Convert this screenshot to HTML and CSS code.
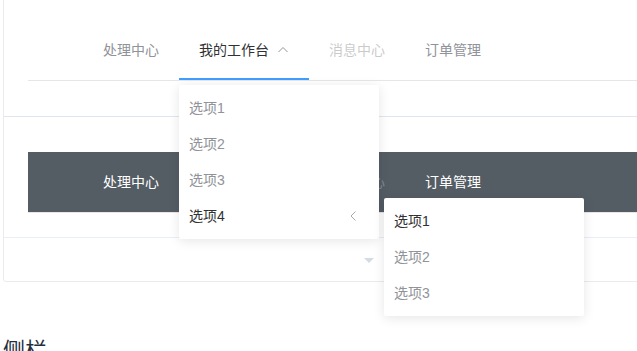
FILE: index.html
```html
<!DOCTYPE html>
<html lang="zh-CN">
<head>
<meta charset="utf-8">
<title>Menu</title>
<link rel="stylesheet" href="styles.css">
</head>
<body>
<div class="page">
  <div class="demo-block">
    <div class="source">
      <nav class="menu menu-light">
        <div class="item">处理中心</div>
        <div class="item submenu is-active">
          <span>我的工作台</span><svg class="arrow-up" width="12" height="12" viewBox="0 0 12 12"><path d="M1.5 8 L6 3.5 L10.5 8" fill="none" stroke="#909399" stroke-width="1"/></svg>
          <div class="popup">
            <div class="pitem">选项1</div>
            <div class="pitem">选项2</div>
            <div class="pitem">选项3</div>
            <div class="pitem psub">选项4
              <svg class="arrow-left" width="12" height="12" viewBox="0 0 12 12"><path d="M8.5 1.5 L4 6 L8.5 10.5" fill="none" stroke="#a4a7ae" stroke-width="1"/></svg>
              <div class="popup nested">
                <div class="pitem on">选项1</div>
                <div class="pitem">选项2</div>
                <div class="pitem">选项3</div>
              </div>
            </div>
          </div>
        </div>
        <div class="item disabled">消息中心</div>
        <div class="item">订单管理</div>
      </nav>
      <div class="line"></div>
      <nav class="menu menu-dark">
        <div class="item">处理中心</div>
        <div class="item submenu">
          <span>我的工作台</span><svg class="arrow-down" width="12" height="12" viewBox="0 0 12 12"><path d="M1.5 4 L6 8.5 L10.5 4" fill="none" stroke="#909399" stroke-width="1"/></svg>
        </div>
        <div class="item disabled">消息中心</div>
        <div class="item">订单管理</div>
      </nav>
    </div>
    <div class="control">
      <svg width="12" height="8" viewBox="0 0 12 8"><polygon points="1,1 11,1 6,6" fill="#d3dce6"/></svg>
    </div>
  </div>
  <h3 class="title">侧栏</h3>
</div>
</body>
</html>
```

FILE: styles.css
```css
html, body {
  margin: 0;
  padding: 0;
  overflow: hidden;
  background: #fff;
}
body {
  font-family: "Helvetica Neue", Helvetica, "Liberation Sans", "Noto Sans CJK SC", sans-serif;
  font-size: 14px;
  color: #303133;
}
.page {
  padding-left: 3px;
  width: 800px;
}
.demo-block {
  box-sizing: border-box;
  width: 732px;
  margin-top: -5px;
  border: 1px solid #ebebeb;
  border-radius: 3px;
}
.source {
  padding: 24px;
}
.menu {
  display: flex;
  padding-left: 55px;
  border-bottom: 1px solid #e6e6e6;
}
.menu-light { background: #fff; }
.menu-dark { background: #545c64; }
.item {
  box-sizing: border-box;
  height: 60px;
  line-height: 60px;
  padding: 0 20px;
  border-bottom: 2px solid transparent;
  color: #909399;
  white-space: nowrap;
}
.menu-light .submenu.is-active {
  border-bottom-color: #409eff;
  color: #303133;
}
.submenu { position: relative; }
.menu-light .disabled {
  color: #303133;
  opacity: 0.25;
}
.menu-dark .item { color: #fff; }
.menu-dark .disabled { opacity: 0.25; }
.arrow-up, .arrow-down {
  margin-left: 8px;
  vertical-align: middle;
  position: relative;
  top: -1px;
}
.popup {
  position: absolute;
  left: 0;
  top: 65px;
  z-index: 100;
  width: 200px;
  padding: 5px 0;
  background: #fff;
  border-radius: 2px;
  box-shadow: 0 2px 12px 0 rgba(0, 0, 0, 0.1);
}
.pitem {
  position: relative;
  height: 36px;
  line-height: 36px;
  padding: 0 10px;
  color: #909399;
  white-space: nowrap;
}
.psub { color: #303133; }
.pitem.on { color: #303133; }
.arrow-left {
  position: absolute;
  right: 20px;
  top: 12px;
}
.nested {
  left: 205px;
  top: 0;
}
.line {
  height: 1px;
  background: #e0e6ed;
  margin: 35px -24px;
}
.control {
  height: 44px;
  border-top: 1px solid #eaeefb;
  display: flex;
  align-items: center;
  justify-content: center;
  padding-top: 2px;
  box-sizing: border-box;
}
.title {
  margin: 52px 0 20px;
  font-size: 22px;
  line-height: 33px;
  font-weight: 400;
  color: #1f2f3d;
}
```
